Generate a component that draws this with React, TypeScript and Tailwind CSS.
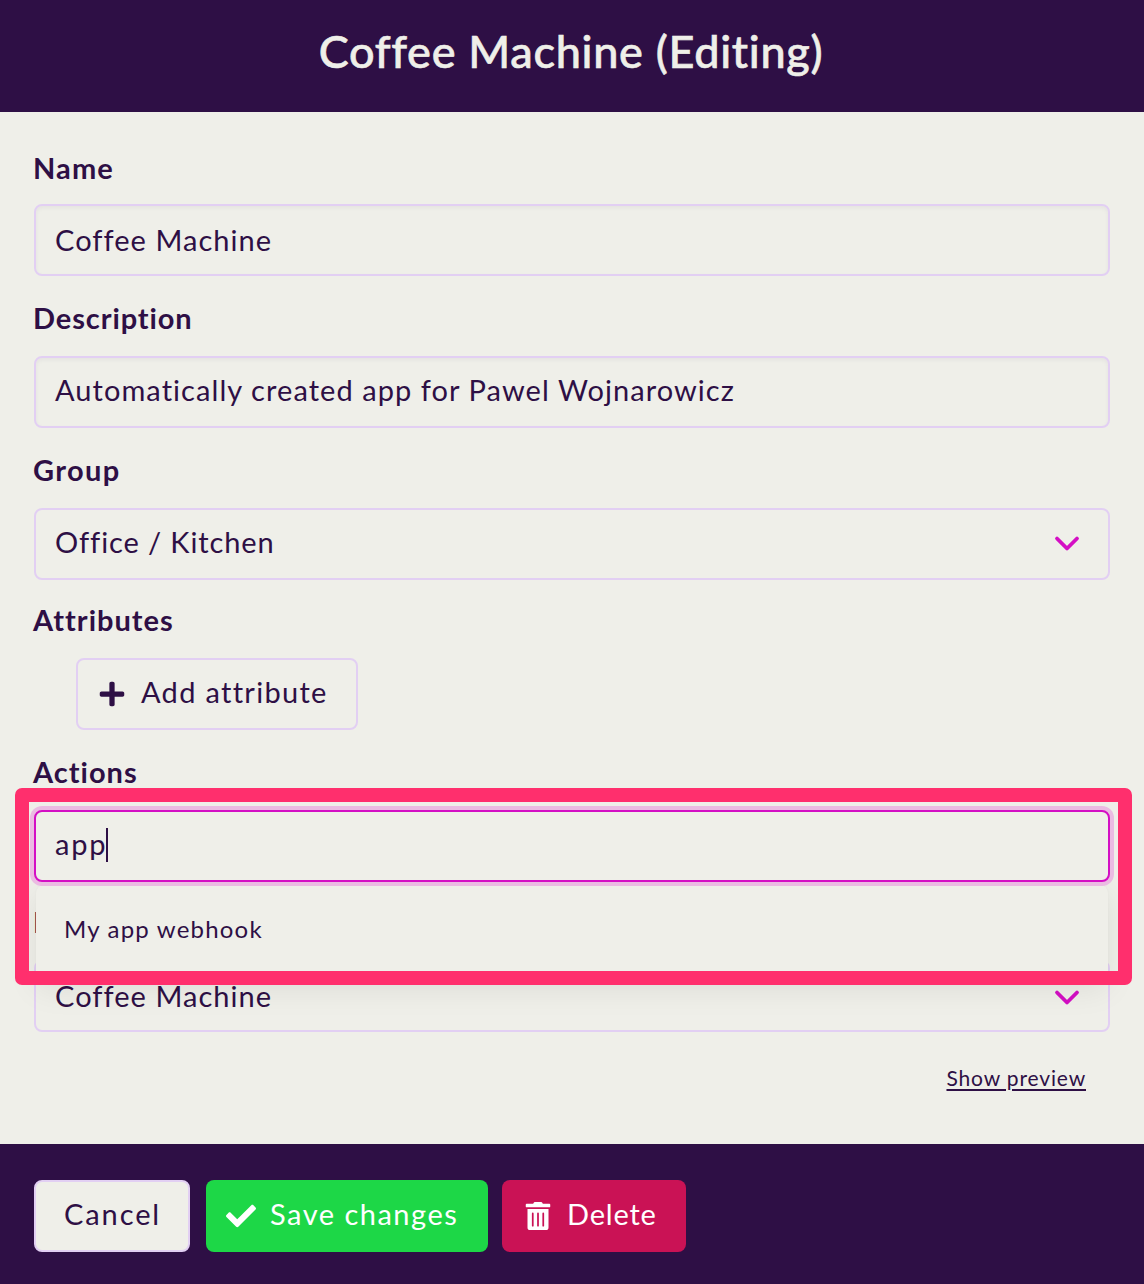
import type { ReactNode } from "react";
import { FaCheck, FaPlus, FaTrashAlt } from "react-icons/fa";

function Label({ children, className }: { children: ReactNode; className: string }) {
  return (
    <div className={`-ml-px flex items-start text-[29px] leading-9 font-bold ${className}`}>
      {children}
    </div>
  );
}

function Field({ children, className }: { children: ReactNode; className: string }) {
  return (
    <div
      className={`flex h-[72px] items-center justify-between rounded-lg border-2 border-[#e2cff3] pr-[27px] pl-[19px] text-[29px] ${className}`}
    >
      {children}
    </div>
  );
}

function Chevron() {
  return (
    <svg width="28" height="20" viewBox="0 0 28 20" fill="none" className="relative top-px">
      <path
        d="M4 5.5 L14 15.5 L24 5.5"
        stroke="#d40fc4"
        strokeWidth="3.8"
        strokeLinecap="round"
        strokeLinejoin="round"
      />
    </svg>
  );
}

export default function App() {
  return (
    <div className="flex h-[1284px] w-[1144px] flex-col overflow-hidden bg-[#efefe9] font-['Lato',sans-serif] text-[#2e0f45]">
      <header className="flex h-28 items-center justify-center bg-[#2e0f45] pr-0.5 pb-[9px] text-[45px] font-medium tracking-[0.7px] text-[#efefe9] [-webkit-text-stroke:0.6px_#efefe9]">
        <h1>Coffee Machine (Editing)</h1>
      </header>

      <main className="h-[1032px] px-[34px] pt-3">
        <Label className="h-20 pt-[26px] tracking-[1.1px]">Name</Label>
        <Field className="pb-px shadow-[inset_0_2px_4px_rgba(46,15,69,0.05)]">
          <span className="tracking-[1.05px]">Coffee Machine</span>
        </Field>

        <Label className="h-20 pt-6 tracking-[0.9px]">Description</Label>
        <Field className="pb-[5px] shadow-[inset_0_2px_4px_rgba(46,15,69,0.05)]">
          <span className="tracking-[1.06px]">Automatically created app for Pawel Wojnarowicz</span>
        </Field>

        <Label className="h-20 pt-6 tracking-[1.4px]">Group</Label>
        <Field className="pb-[5px]">
          <span className="tracking-[0.9px]">Office / Kitchen</span>
          <Chevron />
        </Field>

        <Label className="h-[78px] pt-[22px] tracking-[1px]">Attributes</Label>
        <button className="ml-[42px] flex h-[72px] w-[282px] items-center rounded-lg border-2 border-[#e2cff3] pb-[5px] pl-5 text-[29px]">
          <FaPlus className="relative top-0.5 size-7" />
          <span className="ml-[15px] tracking-[1.3px]">Add attribute</span>
        </button>

        <Label className="h-20 pt-6 tracking-[1px]">Actions</Label>
        <div className="relative">
          <div className="relative z-20 flex h-[72px] items-center rounded-lg border-2 border-[#d40fc4] bg-[#efefe9] pb-[5px] pl-[19px] text-[29px] shadow-[0_0_0_4px_#ebbbe2]">
            <span className="tracking-[1.8px]">app</span>
            <span className="relative top-px -left-px h-[34px] w-[2px] bg-[#2e0f45]" />
          </div>
          <div className="absolute top-[75px] left-[2px] z-10 flex h-24 w-[1072px] items-center rounded-lg bg-[#efefe9] pb-[9px] pl-7 text-2xl tracking-[1.2px] shadow-[0_8px_32px_rgba(0,0,0,0.08),0_0_2px_rgba(0,0,0,0.04)]">
            My app webhook
          </div>
          <div className="absolute -top-[22.5px] left-[-19.5px] z-30 h-[197px] w-[1117px] rounded-[7px] border-[14px] border-[#ff2f6d]" />
        </div>

        <Label className="h-[78px] pt-[22px]">I</Label>
        <Field className="pb-px">
          <span className="tracking-[1.05px]">Coffee Machine</span>
          <Chevron />
        </Field>

        <div className="flex justify-end pt-8 pr-6">
          <a className="text-[21px] leading-7 tracking-[0.85px] underline decoration-2 underline-offset-[3px]">
            Show preview
          </a>
        </div>
      </main>

      <footer className="flex h-[140px] items-start bg-[#2e0f45] pt-9 pl-[34px] text-[29px]">
        <button className="flex h-[72px] w-[156px] items-center rounded-lg border-2 border-[#e2cff3] bg-[#efefe9] pb-[5px] pl-7 tracking-[1.9px]">
          Cancel
        </button>
        <button className="ml-4 flex h-[72px] w-[282px] items-center rounded-lg bg-[#1dd747] pb-[5px] pl-5 text-white">
          <FaCheck className="relative top-0.5 size-[30px]" />
          <span className="ml-3.5 tracking-[1.5px]">Save changes</span>
        </button>
        <button className="ml-3.5 flex h-[72px] w-[184px] items-center rounded-lg bg-[#ca1255] pb-[5px] pl-[22px] text-white">
          <FaTrashAlt className="relative top-0.5 size-7" />
          <span className="ml-[15px] tracking-[0.8px]">Delete</span>
        </button>
      </footer>
    </div>
  );
}
